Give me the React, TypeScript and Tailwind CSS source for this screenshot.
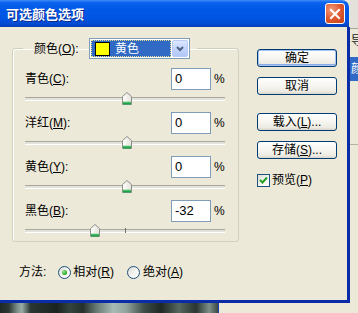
import React from "react";

function K({ k }: { k: string }) {
  return <span className="underline underline-offset-[1px]">{k}</span>;
}

function Thumb({ left }: { left: number }) {
  return (
    <svg
      className="absolute top-0"
      style={{ left }}
      width="10"
      height="13"
      viewBox="0 0 10 13"
    >
      <defs>
        <linearGradient id="tg" x1="0" y1="0" x2="1" y2="0">
          <stop offset="0" stopColor="#FFFFFF" />
          <stop offset="1" stopColor="#E3E2DA" />
        </linearGradient>
      </defs>
      <path
        d="M0.5 4.5 L5 0.5 L9.5 4.5 L9.5 12.5 L0.5 12.5 Z"
        fill="url(#tg)"
        stroke="#8E8F8A"
        strokeWidth="1"
      />
      <rect x="1" y="10" width="8" height="2.5" fill="#1FA34A" />
      <rect x="1" y="9.5" width="8" height="1" fill="#7CD48F" />
    </svg>
  );
}

function Slider({ value }: { value: number }) {
  return (
    <div className="relative mt-[2px] h-[14px] w-[200px]">
      <div className="absolute left-0 right-0 top-[5px] h-[4px] border-t border-[#A9A89C] border-b border-b-white bg-[#E4E3DB]" />
      <div className="absolute left-[100px] top-[4px] h-[5px] w-px bg-[#6E6E66]" />
      <Thumb left={96.5 + value} />
    </div>
  );
}

function Row({
  name,
  k,
  value,
}: {
  name: string;
  k: string;
  value: number;
}) {
  return (
    <div className="flex flex-col">
      <div className="flex h-[22px] items-center">
        <span className="flex-1 text-[12px] leading-[16px]">
          {name}(<K k={k} />):
        </span>
        <div className="flex h-[22px] w-[40px] items-center border border-[#7F9DB9] bg-white pl-[3px] text-[13px] leading-[16px]">
          {value}
        </div>
        <span className="ml-[3px] w-[12px] text-[12px] leading-[16px]">%</span>
      </div>
      <Slider value={value} />
    </div>
  );
}

function XPButton({
  children,
  def,
}: {
  children: React.ReactNode;
  def?: boolean;
}) {
  return (
    <div
      className={
        "flex h-[18px] w-[80px] items-center justify-center rounded-[3px] border border-[#003C74] bg-[linear-gradient(180deg,#FFFFFF_0%,#F6F5F0_50%,#ECEAE2_85%,#D8D4C8_100%)] text-[12px] leading-[14px] " +
        (def
          ? "shadow-[inset_0_0_0_1px_#A6C4F2,inset_0_-1px_0_1px_#89ADE4]"
          : "")
      }
    >
      {children}
    </div>
  );
}

function Radio({ checked }: { checked?: boolean }) {
  return (
    <div className="flex h-[13px] w-[13px] items-center justify-center rounded-full border border-[#1C5180] bg-[linear-gradient(135deg,#DCDBD3_0%,#F5F5F2_55%,#FFFFFF_100%)]">
      {checked && (
        <div className="h-[5px] w-[5px] rounded-full bg-[radial-gradient(circle_at_35%_35%,#9BE79B_0%,#2FB32F_55%,#1C8A1C_100%)]" />
      )}
    </div>
  );
}

export default function App() {
  return (
    <div className="flex h-[313px] w-[358px] overflow-hidden bg-[#ECE9D8] font-['Liberation_Sans','Noto_Sans_CJK_SC',sans-serif] text-black">
      <div className="flex w-[350px] flex-col">
        {/* Dialog */}
        <div className="flex h-[303px] flex-col">
          {/* Title bar */}
          <div className="flex h-[27px] w-[349px] items-center rounded-tr-[7px] bg-[linear-gradient(180deg,#3D8DF7_0%,#0B62EC_10%,#0058E8_35%,#0054E2_70%,#024ACF_90%,#0A3DB2_100%)]">
            <span className="pl-[6px] font-['Noto_Sans_CJK_SC',sans-serif] text-[13px] font-bold leading-[16px] text-white [text-shadow:1px_1px_0_#0B2A8C]">
              可选颜色选项
            </span>
            <div className="ml-auto mr-[4px] flex h-[21px] w-[20px] items-center justify-center rounded-[3px] border border-white bg-[radial-gradient(circle_at_30%_30%,#F29A7C_0%,#E0592F_50%,#C2401A_100%)]">
              <svg width="12" height="12" viewBox="0 0 12 12">
                <path
                  d="M2 2 L10 10 M10 2 L2 10"
                  stroke="#FFFFFF"
                  strokeWidth="2"
                  strokeLinecap="square"
                />
              </svg>
            </div>
          </div>
          {/* Body */}
          <div className="flex flex-1 border-b-[3px] border-r-[3px] border-[#0A2CA6] bg-[#ECE9D8]">
            <div className="ml-[12px] flex flex-col">
              <fieldset className="mt-[11px] w-[227px] rounded-[3px] border border-[#D0D0BF] px-[12px] pb-[3px] pt-[9px] shadow-[inset_1px_1px_0_#FFFFFF]">
                <legend className="ml-[-2px] pl-[11px] pr-[7px]">
                  <div className="flex items-center">
                    <span className="w-[55px] text-[12px] leading-[16px]">
                      颜色(<K k="O" />):
                    </span>
                    <div className="flex h-[21px] w-[101px] items-stretch border border-[#7F9DB9] bg-white p-[1px]">
                      <div className="flex flex-1 items-center border border-dotted border-[#E9DD8A] bg-[#316AC5] pl-[3px]">
                        <div className="h-[14px] w-[15px] border border-black bg-[#FFFF00]" />
                        <span className="ml-[5px] text-[12px] leading-[14px] text-white">
                          黄色
                        </span>
                      </div>
                      <div className="ml-[1px] flex w-[16px] items-center justify-center rounded-[2px] border border-[#B8CBF5] bg-[linear-gradient(180deg,#DCE7FE_0%,#C3D4FC_50%,#B3C8F6_100%)]">
                        <svg width="8" height="6" viewBox="0 0 8 6">
                          <path
                            d="M1 1 L4 4 L7 1"
                            fill="none"
                            stroke="#4D6185"
                            strokeWidth="2"
                          />
                        </svg>
                      </div>
                    </div>
                  </div>
                </legend>
                <div className="flex flex-col gap-[6px]">
                  <Row name="青色" k="C" value={0} />
                  <Row name="洋红" k="M" value={0} />
                  <Row name="黄色" k="Y" value={0} />
                  <Row name="黑色" k="B" value={-32} />
                </div>
              </fieldset>
              <div className="mt-[22px] flex h-[16px] items-center pl-[7px] text-[12px] leading-[16px]">
                <span>方法:</span>
                <div className="ml-[12px]">
                  <Radio checked />
                </div>
                <span className="ml-[2px]">
                  相对(<K k="R" />)
                </span>
                <div className="ml-[13px]">
                  <Radio />
                </div>
                <span className="ml-[3px]">
                  绝对(<K k="A" />)
                </span>
              </div>
            </div>
            {/* Buttons */}
            <div className="ml-[18px] mt-[22px] flex flex-col">
              <XPButton def>确定</XPButton>
              <div className="mt-[10px]">
                <XPButton>取消</XPButton>
              </div>
              <div className="mt-[18px]">
                <XPButton>
                  载入(<K k="L" />)...
                </XPButton>
              </div>
              <div className="mt-[10px]">
                <XPButton>
                  存储(<K k="S" />)...
                </XPButton>
              </div>
              <div className="mt-[14px] flex h-[14px] items-center">
                <div className="flex h-[13px] w-[13px] items-center justify-center border border-[#1C5180] bg-[linear-gradient(135deg,#DCDBD3_0%,#F5F5F2_55%,#FFFFFF_100%)]">
                  <svg width="9" height="9" viewBox="0 0 9 9">
                    <path
                      d="M1 4 L3.5 6.5 L8 1.5"
                      fill="none"
                      stroke="#21A121"
                      strokeWidth="2"
                    />
                  </svg>
                </div>
                <span className="ml-[2px] text-[12px] leading-[16px]">
                  预览(<K k="P" />)
                </span>
              </div>
            </div>
          </div>
        </div>
        {/* Below dialog */}
        <div className="flex flex-1">
          <div className="w-[219px] border-r border-[#1B3FB0] bg-[linear-gradient(90deg,#1E2925_0%,#2B3833_4%,#7E918A_8%,#9AADA6_10%,#2A3732_14%,#1A231F_26%,#34443E_32%,#25302C_38%,#6E827B_45%,#A8BBB4_52%,#90A39C_58%,#3E4E48_66%,#1E2824_74%,#56685F_82%,#2A3631_90%,#7C8F88_96%,#3A4842_100%)]" />
        </div>
      </div>
      {/* Right strip: neighbouring panel */}
      <div className="flex flex-1 flex-col overflow-hidden bg-[#ECE9D8]">
        <div className="h-[29px] border-b border-[#A7A69A] bg-[#E3E1D9]" />
        <div className="h-[28px] whitespace-nowrap pl-[1px] text-[12px] leading-[24px] text-[#222]">
          导航
        </div>
        <div className="h-[24px] whitespace-nowrap bg-[#316AC5] pl-[1px] text-[12px] leading-[24px] text-white">
          颜色
        </div>
        <div className="h-[63px]" />
        <div className="h-px bg-[#B5B3A6]" />
      </div>
    </div>
  );
}
